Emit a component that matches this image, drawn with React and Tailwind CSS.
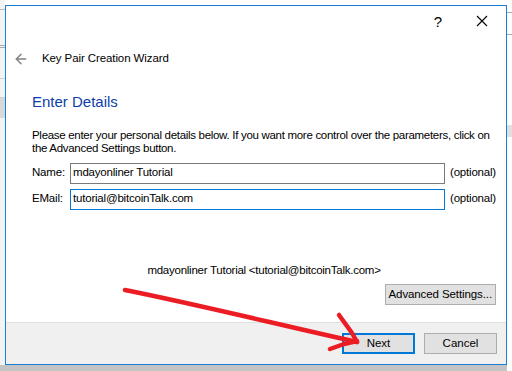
import { ArrowLeft } from 'lucide-react'

const font = { fontFamily: '"Liberation Sans", Arial, sans-serif' }

function Field({ label, value, focused }) {
  return (
    <div className="flex items-center h-[26px]">
      <span className="w-[38px] shrink-0 text-[11.5px] tracking-[-0.2px] text-black">{label}</span>
      <div
        className={`flex items-center shrink-0 w-[375px] h-[21px] px-[2px] text-[11.5px] tracking-[-0.2px] text-black bg-white border
          ${focused ? 'border-[#0078d7]' : 'border-[#7a7a7a]'}`}>
        {value}
      </div>
      <span className="ml-auto text-[11.5px] tracking-[-0.2px] text-black">(optional)</span>
    </div>
  )
}

export default function App() {
  return (
    <div className="relative w-[512px] h-[371px] overflow-hidden bg-white select-none" style={font}>
      {/* desktop behind the dialog */}
      <div className="absolute left-0 top-0 w-[5px] h-full bg-[#f3f3f3]">
        <div className="h-[10px] border-b border-[#bbb]" />
        <div className="mt-[35px] h-[3px] border-y border-[#aaa]" />
        <div className="mt-[30px] h-[20px] border-y border-[#d0d0d0]" />
        <div className="h-[20px] bg-[#d8d8d8]" />
      </div>
      <div className="absolute left-0 bottom-0 w-full h-[6px] bg-[#c4c4c4]" />
      <div className="absolute right-0 top-0 w-[5px] h-full bg-white">
        <div className="mt-[12px] h-[1px] bg-[#aaa]" />
        <div className="mt-[21px] h-[1px] bg-[#aaa]" />
        <div className="mt-[90px] h-[12px] bg-[#e0e0e0]" />
      </div>

      <div className="pt-[5px] pl-[5px]">
        <div className="flex flex-col w-[502px] h-[360px] border border-[#1a7fd4] bg-white">
          {/* title bar */}
          <div className="flex items-center justify-end h-[30px] pr-[18px] gap-[34px] text-[15px] text-black">
            <span className="leading-none">?</span>
            <svg width="12" height="12" viewBox="0 0 12 12">
              <path d="M1 1 L11 11 M11 1 L1 11" stroke="#000" strokeWidth="1.1" />
            </svg>
          </div>

          {/* header */}
          <div className="flex items-center h-[46px] pl-[7px]">
            <ArrowLeft className="w-[16px] h-[16px] text-[#808080]" strokeWidth={2.2} />
            <span className="ml-[13px] text-[11.5px] tracking-[-0.1px] text-black">Key Pair Creation Wizard</span>
          </div>

          {/* body */}
          <div className="flex flex-col flex-1 pl-[26px] pr-[10px]">
            <div className="h-[40px] pt-[9px] text-[15px] text-[#0d3ea8]">Enter Details</div>
            <p className="text-[11.5px] leading-[13px] tracking-[-0.3px] text-black pt-[7px]">
              Please enter your personal details below. If you want more control over the parameters, click on the
              Advanced Settings button.
            </p>
            <div className="mt-[5px] flex flex-col">
              <Field label="Name:" value="mdayonliner Tutorial" />
              <Field label="EMail:" value="tutorial@bitcoinTalk.com" focused />
            </div>
            <div className="mt-[50px] text-center text-[11.5px] tracking-[-0.25px] text-black">
              mdayonliner Tutorial &lt;tutorial@bitcoinTalk.com&gt;
            </div>
            <div className="flex justify-end mt-[5px]">
              <button className="h-[21px] px-[3px] text-[11.5px] tracking-[-0.1px] text-black bg-[#e1e1e1] border border-[#adadad]">
                Advanced Settings...
              </button>
            </div>
          </div>

          {/* footer */}
          <div className="flex items-center justify-end gap-[9px] h-[42px] pr-[9px] bg-[#f0f0f0] border-t border-[#dfdfdf]">
            <button className="w-[73px] h-[21px] text-[11.5px] text-black bg-[#e1e1e1] border-2 border-[#0078d7]">
              Next
            </button>
            <button className="w-[73px] h-[21px] text-[11.5px] text-black bg-[#e1e1e1] border border-[#adadad]">
              Cancel
            </button>
          </div>
        </div>
      </div>

      {/* red annotation arrow */}
      <svg className="absolute left-0 top-0 pointer-events-none" width="512" height="371" viewBox="0 0 512 371">
        <g stroke="#ec1c24" strokeWidth="4.5" strokeLinecap="round" strokeLinejoin="round" fill="none">
          <path d="M125 290 C 200 305, 280 325, 357 342" />
          <path d="M339 315 L 352 333 L 357 342" />
          <path d="M330 349 L 344 344 L 357 341" />
        </g>
      </svg>
    </div>
  )
}
